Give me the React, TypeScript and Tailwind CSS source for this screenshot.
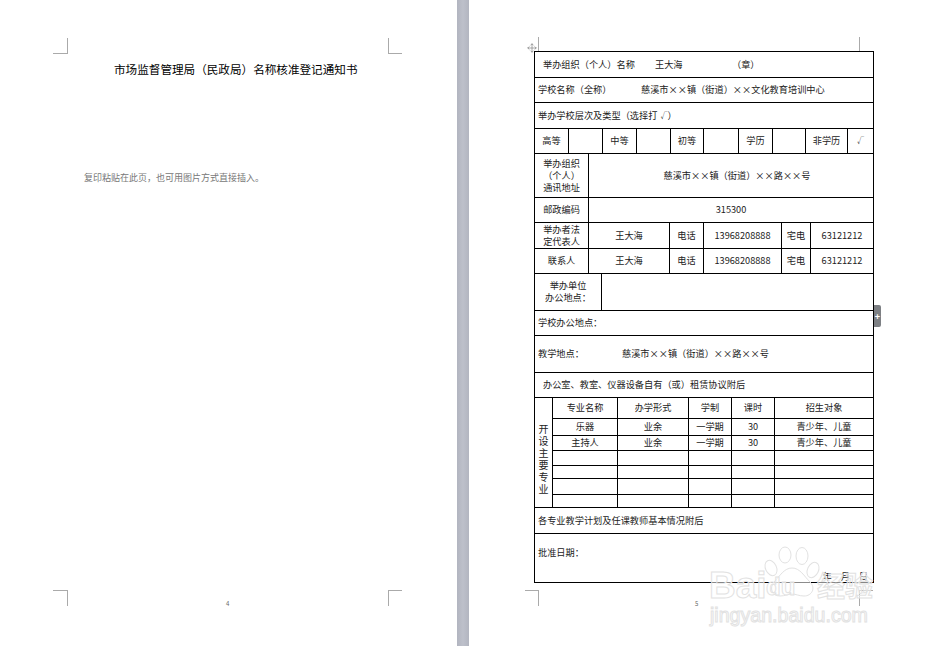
import React from "react";
import { Move } from "lucide-react";

// word page view: two pages side by side, right page holds the form table
const font = { fontFamily: '"Noto Sans CJK SC", "Liberation Sans", sans-serif' };

const cellLine = "flex items-center justify-center text-center border-r border-black h-full shrink-0 pb-[2px]";
const lastCell = "flex h-full flex-1 items-center justify-center pb-[2px] text-center";

function Row({ className, children }: { className: string; children: React.ReactNode }) {
  return <div className={"flex items-center border-b border-black " + className}>{children}</div>;
}

function Watermark() {
  return (
    <svg className="absolute left-[236px] top-[540px] pointer-events-none" width="175" height="92" viewBox="0 0 175 92">
      <g fill="rgba(255,255,255,0.55)" stroke="#e2e2e2" strokeWidth="1">
        <ellipse cx="66" cy="28" rx="5.5" ry="8" transform="rotate(-25 66 28)" />
        <ellipse cx="80" cy="15" rx="6" ry="8" />
        <ellipse cx="97" cy="16" rx="6" ry="8.5" />
        <ellipse cx="108" cy="30" rx="5.5" ry="8" transform="rotate(25 108 30)" />
        <path d="M87 28c8 0 12 8 18 14 6 6 2 14-6 14-5 0-8-2-12-2s-7 2-12 2c-8 0-11-8-6-14 6-6 10-14 18-14z" />
        <text x="4" y="58" fontFamily="Liberation Sans" fontSize="37" fontWeight="700">Bai</text>
        <text x="61" y="55" fontFamily="Liberation Sans" fontSize="24" fontWeight="700">du</text>
        <text x="112" y="57" fontFamily="Noto Sans CJK SC" fontSize="28" fontWeight="700">经验</text>
        <text x="5" y="82" fontFamily="Liberation Sans" fontSize="19.6">jingyan.baidu.com</text>
      </g>
    </svg>
  );
}

export default function App() {
  return (
    <div className="flex h-[646px] w-[927px] overflow-hidden bg-white text-[9.2px] leading-[12px] text-[#222]" style={font}>
      {/* left page */}
      <div className="relative flex h-full w-[457px] shrink-0 flex-col">
        <div className="absolute left-[53px] top-[38px] h-[16px] w-[15px] border-r border-b border-[#aaa]" />
        <div className="absolute left-[388px] top-[38px] h-[16px] w-[14px] border-l border-b border-[#aaa]" />
        <div className="absolute left-[53px] top-[590px] h-[16px] w-[15px] border-r border-t border-[#aaa]" />
        <div className="absolute left-[388px] top-[590px] h-[16px] w-[14px] border-l border-t border-[#aaa]" />
        <div className="ml-[114px] mt-[61px] whitespace-nowrap text-[11.6px] leading-[16px] text-black">市场监督管理局（民政局）名称核准登记通知书</div>
        <div className="ml-[84px] mt-[93px] whitespace-nowrap text-[9px] leading-[16px] text-[#777]">复印粘贴在此页，也可用图片方式直接插入。</div>
        <div className="mt-auto mb-[38px] ml-[226px] text-[6px] leading-[8px] text-[#666]">4</div>
      </div>

      {/* gap between pages */}
      <div className="h-full w-[12px] shrink-0 bg-linear-to-r from-[#b2b5c0] via-[#bdc0ca] to-[#b2b5c0]" />

      {/* right page */}
      <div className="relative flex h-full flex-1 flex-col">
        <div className="absolute left-[69px] top-[37px] h-[14px] w-px bg-[#aaa]" />
        <div className="absolute left-[390px] top-[37px] h-[14px] w-px bg-[#aaa]" />
        <div className="absolute left-[56px] top-[590px] h-[16px] w-[14px] border-r border-t border-[#aaa]" />
        <div className="absolute left-[390px] top-[590px] h-[16px] w-[14px] border-l border-t border-[#aaa]" />
        <Move className="absolute left-[58px] top-[43px] text-[#777]" size={10} strokeWidth={1.5} />

        {/* form table */}
        <div className="ml-[65px] mt-[51px] w-[340px] shrink-0 border border-black bg-white">
          <Row className="h-[26px] pl-[8px] pb-[2px]">
            <span className="w-[112px] whitespace-nowrap">举办组织（个人）名称</span>
            <span className="w-[77px]">王大海</span>
            <span>（章）</span>
          </Row>
          <Row className="h-[25px] pl-[3px] pb-[2px]">
            <span className="w-[103px] whitespace-nowrap">学校名称（全称）</span>
            <span className="whitespace-nowrap">慈溪市××镇（街道）××文化教育培训中心</span>
          </Row>
          <Row className="h-[26px] pl-[3px] pb-[2px]">举办学校层次及类型（选择打<span className="ml-[3px] text-[7px]">√</span>）</Row>
          <Row className="h-[25px]">
            <div className={cellLine + " w-[34px]"}>高等</div>
            <div className={cellLine + " w-[34px]"} />
            <div className={cellLine + " w-[34px]"}>中等</div>
            <div className={cellLine + " w-[34px]"} />
            <div className={cellLine + " w-[33px]"}>初等</div>
            <div className={cellLine + " w-[35px]"} />
            <div className={cellLine + " w-[34px]"}>学历</div>
            <div className={cellLine + " w-[33px]"} />
            <div className={cellLine + " w-[42px]"}>非学历</div>
            <div className={lastCell + " text-[7px]"}>√</div>
          </Row>
          <Row className="h-[44px]">
            <div className={cellLine + " w-[54px]"}>举办组织<br />（个人）<br />通讯地址</div>
            <div className={lastCell + " pl-[12px]"}>慈溪市××镇（街道）××路××号</div>
          </Row>
          <Row className="h-[25px]">
            <div className={cellLine + " w-[54px]"}>邮政编码</div>
            <div className={lastCell}>315300</div>
          </Row>
          <Row className="h-[26px]">
            <div className={cellLine + " w-[54px]"}>举办者法<br />定代表人</div>
            <div className={cellLine + " w-[81px]"}>王大海</div>
            <div className={cellLine + " w-[34px]"}>电话</div>
            <div className={cellLine + " w-[78px]"}>13968208888</div>
            <div className={cellLine + " w-[29px]"}>宅电</div>
            <div className={lastCell}>63121212</div>
          </Row>
          <Row className="h-[25px]">
            <div className={cellLine + " w-[54px]"}>联系人</div>
            <div className={cellLine + " w-[81px]"}>王大海</div>
            <div className={cellLine + " w-[34px]"}>电话</div>
            <div className={cellLine + " w-[78px]"}>13968208888</div>
            <div className={cellLine + " w-[29px]"}>宅电</div>
            <div className={lastCell}>63121212</div>
          </Row>
          <Row className="h-[37px]">
            <div className={cellLine + " w-[67px]"}>举办单位<br />办公地点：</div>
            <div className="flex-1" />
          </Row>
          <Row className="h-[25px] pl-[3px] pb-[2px]">学校办公地点：</Row>
          <Row className="h-[37px] pl-[3px] pb-[2px]">
            <span className="w-[84px]">教学地点：</span>
            <span className="whitespace-nowrap">慈溪市××镇（街道）××路××号</span>
          </Row>
          <Row className="h-[25px] pl-[8px] pb-[2px]">办公室、教室、仪器设备自有（或）租赁协议附后</Row>

          {/* majors sub table */}
          <div className="flex h-[110px] border-b border-black">
            <div className="flex h-full w-[18px] shrink-0 flex-col items-center justify-center border-r border-black pt-[13px] text-[10px]">
              <span>开</span>
              <span>设</span>
              <span>主</span>
              <span>要</span>
              <span>专</span>
              <span>业</span>
            </div>
            <div className="flex-1">
              <Row className="h-[21px]">
                <div className={cellLine + " w-[65px]"}>专业名称</div>
                <div className={cellLine + " w-[71px]"}>办学形式</div>
                <div className={cellLine + " w-[43px]"}>学制</div>
                <div className={cellLine + " w-[43px]"}>课时</div>
                <div className={lastCell}>招生对象</div>
              </Row>
              <Row className="h-[17px]">
                <div className={cellLine + " w-[65px]"}>乐器</div>
                <div className={cellLine + " w-[71px]"}>业余</div>
                <div className={cellLine + " w-[43px]"}>一学期</div>
                <div className={cellLine + " w-[43px]"}>30</div>
                <div className={lastCell}>青少年、儿童</div>
              </Row>
              <Row className="h-[15px]">
                <div className={cellLine + " w-[65px]"}>主持人</div>
                <div className={cellLine + " w-[71px]"}>业余</div>
                <div className={cellLine + " w-[43px]"}>一学期</div>
                <div className={cellLine + " w-[43px]"}>30</div>
                <div className={lastCell}>青少年、儿童</div>
              </Row>
              <Row className="h-[15px]">
                <div className={cellLine + " w-[65px]"} />
                <div className={cellLine + " w-[71px]"} />
                <div className={cellLine + " w-[43px]"} />
                <div className={cellLine + " w-[43px]"} />
              </Row>
              <Row className="h-[13px]">
                <div className={cellLine + " w-[65px]"} />
                <div className={cellLine + " w-[71px]"} />
                <div className={cellLine + " w-[43px]"} />
                <div className={cellLine + " w-[43px]"} />
              </Row>
              <Row className="h-[16px]">
                <div className={cellLine + " w-[65px]"} />
                <div className={cellLine + " w-[71px]"} />
                <div className={cellLine + " w-[43px]"} />
                <div className={cellLine + " w-[43px]"} />
              </Row>
              <div className="flex h-[12px] items-center">
                <div className={cellLine + " w-[65px]"} />
                <div className={cellLine + " w-[71px]"} />
                <div className={cellLine + " w-[43px]"} />
                <div className={cellLine + " w-[43px]"} />
              </div>
            </div>
          </div>

          <Row className="h-[26px] pl-[3px] pb-[2px]">各专业教学计划及任课教师基本情况附后</Row>
          <div className="flex h-[48px] flex-col justify-between pl-[3px]">
            <div className="mt-[12px]">批准日期：</div>
            <div className="flex justify-end gap-[9px] pr-[5px]">
              <span>年</span>
              <span>月</span>
              <span>日</span>
            </div>
          </div>
        </div>

        <div className="ml-[226px] mt-[17px] text-[6px] leading-[8px] text-[#666]">5</div>

        {/* side handle of the table */}
        <div className="absolute left-[405px] top-[305px] flex h-[22px] w-[7px] items-center justify-center rounded-r-[2px] bg-[#7d8084] text-[9px] font-bold leading-none text-white">+</div>
        <Watermark />
      </div>
    </div>
  );
}
